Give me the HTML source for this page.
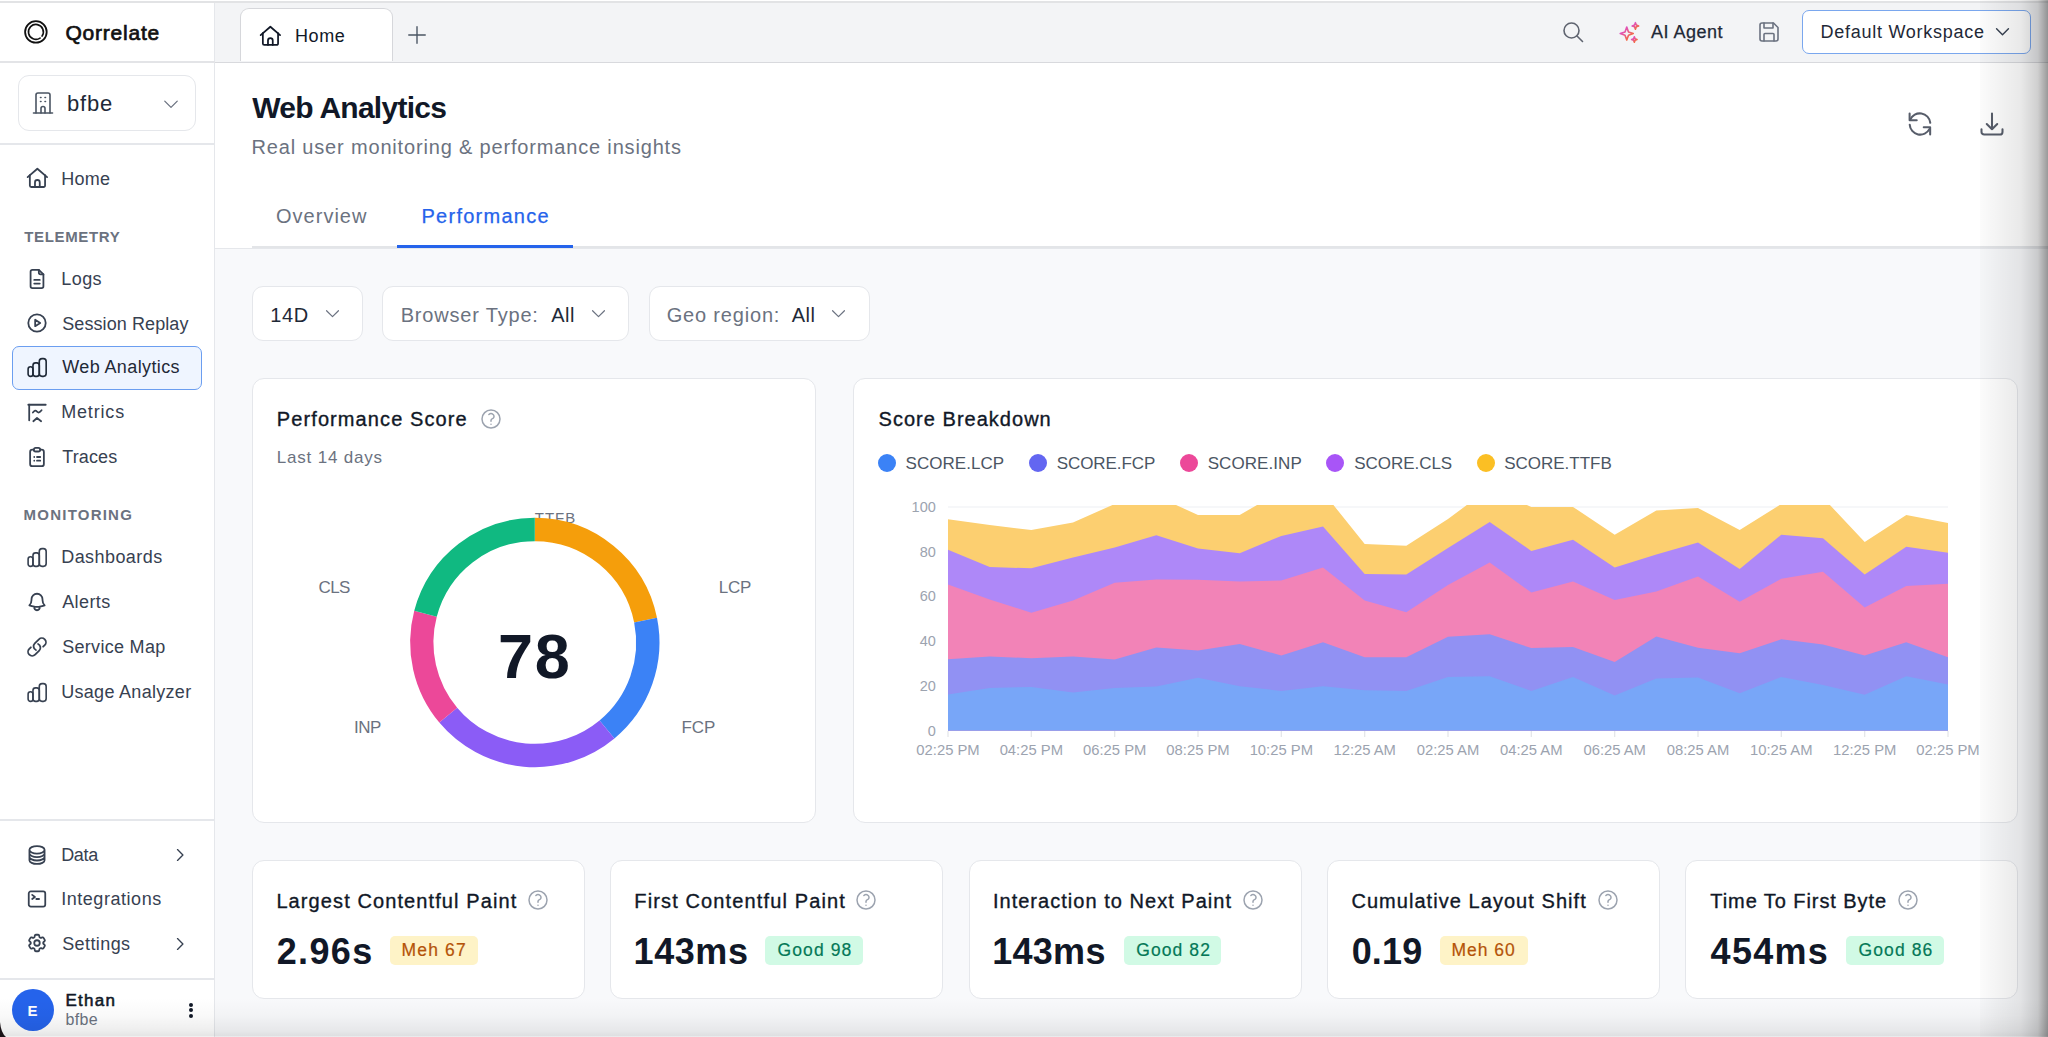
<!DOCTYPE html>
<html><head><meta charset="utf-8">
<style>
*{box-sizing:border-box;margin:0;padding:0}
html,body{width:2048px;height:1037px;overflow:hidden;background:#fff;font-family:"Liberation Sans",sans-serif;color:#111827;position:relative}
.t{position:absolute;line-height:1;white-space:nowrap}
.box{position:absolute}
.ic{position:absolute;display:block;overflow:visible}
.hl{position:absolute;height:1.5px;background:#e5e7eb}
.card{background:#fff;border:1.5px solid #e5e7eb;border-radius:12px}
#topline{position:absolute;left:0;top:1px;width:2048px;height:2px;background:#e2e3e5}
#sidebar{position:absolute;left:0;top:3px;width:215px;height:1035px;background:#fff;border-right:1.5px solid #e5e7eb}
#topbar{position:absolute;left:215px;top:3px;width:1833px;height:60px;background:#f3f4f6;border-bottom:1.8px solid #d8d9dd}
#header{position:absolute;left:215px;top:63px;width:1833px;height:185.5px;background:#fff;border-bottom:1.5px solid #e5e7eb}
#content{position:absolute;left:215px;top:248.5px;width:1833px;height:789px;background:#f8f9fb}
</style></head><body>
<div id="topline"></div>
<div id="sidebar"></div>
<svg class="ic" style="left:18px;top:14px" width="36" height="36" viewBox="0 0 36 36"><circle cx="17.9" cy="17.9" r="10.8" fill="none" stroke="#111" stroke-width="1.8"/><path d="M22.07 24.08A7.45 7.45 0 1 1 24.08 22.07" fill="none" stroke="#111" stroke-width="1.65" stroke-linecap="round"/></svg>
<div class="t" style="left:65.5px;top:22.1px;font-size:21px;color:#111111;font-weight:normal;letter-spacing:0.77px;-webkit-text-stroke:0.7px currentColor;">Qorrelate</div>
<div class="hl" style="left:0;top:61.2px;width:215px;height:1.8px;background:#e3e4e7"></div>
<div class="box" style="left:18px;top:75px;width:178px;height:56px;border-radius:11px;border:1.5px solid #e5e7eb"></div>
<svg class="ic" style="left:31px;top:91px;color:#4b5563" width="24" height="24" viewBox="0 0 24 24" fill="none" stroke="currentColor" stroke-linecap="round" stroke-linejoin="round" stroke-width="1.6"><path d="M5 22V4a2 2 0 0 1 2-2h10a2 2 0 0 1 2 2v18"/><path d="M2.5 22h19"/><path d="M10 22v-4.5a2 2 0 0 1 4 0V22"/><path d="M9.5 6.5h.5M14 6.5h.5M9.5 10.5h.5M14 10.5h.5"/></svg>
<div class="t" style="left:67.0px;top:92.7px;font-size:22px;color:#1f2937;font-weight:normal;letter-spacing:0.81px;">bfbe</div>
<svg class="ic" style="left:161px;top:94px;color:#6b7280" width="20" height="20" viewBox="0 0 24 24" fill="none" stroke="currentColor" stroke-linecap="round" stroke-linejoin="round" stroke-width="1.5"><path d="m4.5 8.5 7.5 7.5 7.5-7.5"/></svg>
<div class="hl" style="left:0;top:143px;width:215px"></div>
<svg class="ic" style="left:26px;top:167.4px;color:#374151" width="22" height="22" viewBox="0 0 24 24" fill="none" stroke="currentColor" stroke-linecap="round" stroke-linejoin="round" stroke-width="1.95"><path d="M1.8 11 12.4 1.9 23 11"/><path d="M4.2 8.8V20.2a1.6 1.6 0 0 0 1.6 1.6h13.4a1.6 1.6 0 0 0 1.6-1.6V8.8"/><path d="M9.8 21.8v-5a2.6 2.6 0 0 1 5.2 0v5"/></svg><div class="t" style="left:61.2px;top:169.6px;font-size:18px;color:#374151;font-weight:normal;letter-spacing:0.23px;">Home</div>
<div class="t" style="left:24.3px;top:229.0px;font-size:15px;color:#6b7280;font-weight:bold;letter-spacing:0.64px;">TELEMETRY</div>
<svg class="ic" style="left:26px;top:267.6px;color:#374151" width="22" height="22" viewBox="0 0 24 24" fill="none" stroke="currentColor" stroke-linecap="round" stroke-linejoin="round" stroke-width="1.95"><path d="M14 2H7a2 2 0 0 0-2 2v16a2 2 0 0 0 2 2h10a2 2 0 0 0 2-2V7z"/><path d="M14 2v3a2 2 0 0 0 2 2h3"/><path d="M9 13h6M9 17h6"/></svg><div class="t" style="left:61.2px;top:269.8px;font-size:18px;color:#374151;font-weight:normal;letter-spacing:0.46px;">Logs</div>
<svg class="ic" style="left:26px;top:312.3px;color:#374151" width="22" height="22" viewBox="0 0 24 24" fill="none" stroke="currentColor" stroke-linecap="round" stroke-linejoin="round" stroke-width="1.95"><circle cx="12" cy="12" r="9.5"/><path d="M10 8.5v7l5.5-3.5z"/></svg><div class="t" style="left:62.2px;top:314.5px;font-size:18px;color:#374151;font-weight:normal;letter-spacing:0.09px;">Session Replay</div>
<div class="box" style="left:12px;top:346px;width:190px;height:44px;border-radius:7px;border:1.5px solid #6b9ef0;background:#eff5ff"></div>
<svg class="ic" style="left:26px;top:356.20000000000005px;color:#1f2937" width="22" height="22" viewBox="0 0 24 24" fill="none" stroke="currentColor" stroke-linecap="round" stroke-linejoin="round" stroke-width="1.95"><g stroke-width="1.75"><rect x="2.3" y="11.8" width="5.3" height="10.4" rx="2.6"/><rect x="7.6" y="7.5" width="6.9" height="14.7" rx="2.8"/><rect x="14.5" y="2.9" width="7.5" height="19.3" rx="3"/></g></svg><div class="t" style="left:62.2px;top:358.4px;font-size:18px;color:#1f2937;font-weight:normal;letter-spacing:0.39px;">Web Analytics</div>
<svg class="ic" style="left:26px;top:402.0px;color:#374151" width="22" height="22" viewBox="0 0 24 24" fill="none" stroke="currentColor" stroke-linecap="round" stroke-linejoin="round" stroke-width="1.95"><path d="M2.5 3h19"/><path d="M3.5 3v17"/><path d="M7.5 11.5c2-2.5 3-2.5 4.5-1s2.5 1.5 5-1.5"/><path d="M8 21l4-3.5 4.5 3.5"/></svg><div class="t" style="left:61.2px;top:403.2px;font-size:18px;color:#374151;font-weight:normal;letter-spacing:0.83px;">Metrics</div>
<svg class="ic" style="left:26px;top:445.5px;color:#374151" width="22" height="22" viewBox="0 0 24 24" fill="none" stroke="currentColor" stroke-linecap="round" stroke-linejoin="round" stroke-width="1.95"><rect x="8.5" y="2" width="7" height="4" rx="2"/><path d="M8.5 4H7a2.5 2.5 0 0 0-2.5 2.5v13A2.5 2.5 0 0 0 7 22h10a2.5 2.5 0 0 0 2.5-2.5v-13A2.5 2.5 0 0 0 17 4h-1.5"/><path d="M9 12h.01M9 16h.01M12 12h3.5M12 16h3.5"/></svg><div class="t" style="left:62.2px;top:447.7px;font-size:18px;color:#374151;font-weight:normal;letter-spacing:0.13px;">Traces</div>
<div class="t" style="left:23.6px;top:507.3px;font-size:15px;color:#6b7280;font-weight:bold;letter-spacing:1.22px;">MONITORING</div>
<svg class="ic" style="left:26px;top:546.2px;color:#374151" width="22" height="22" viewBox="0 0 24 24" fill="none" stroke="currentColor" stroke-linecap="round" stroke-linejoin="round" stroke-width="1.95"><g stroke-width="1.75"><rect x="2.3" y="11.8" width="5.3" height="10.4" rx="2.6"/><rect x="7.6" y="7.5" width="6.9" height="14.7" rx="2.8"/><rect x="14.5" y="2.9" width="7.5" height="19.3" rx="3"/></g></svg><div class="t" style="left:61.2px;top:548.4px;font-size:18px;color:#374151;font-weight:normal;letter-spacing:0.44px;">Dashboards</div>
<svg class="ic" style="left:26px;top:591.1px;color:#374151" width="22" height="22" viewBox="0 0 24 24" fill="none" stroke="currentColor" stroke-linecap="round" stroke-linejoin="round" stroke-width="1.95"><path d="M14.857 17.082a23.848 23.848 0 0 0 5.454-1.31A8.967 8.967 0 0 1 18 9.75V9A6 6 0 0 0 6 9v.75a8.967 8.967 0 0 1-2.312 6.022c1.733.64 3.56 1.085 5.455 1.31m5.714 0a24.255 24.255 0 0 1-5.714 0m5.714 0a3 3 0 1 1-5.714 0"/></svg><div class="t" style="left:62.2px;top:593.3px;font-size:18px;color:#374151;font-weight:normal;letter-spacing:0.40px;">Alerts</div>
<svg class="ic" style="left:26px;top:635.6px;color:#374151" width="22" height="22" viewBox="0 0 24 24" fill="none" stroke="currentColor" stroke-linecap="round" stroke-linejoin="round" stroke-width="1.95"><path d="M13.19 8.688a4.5 4.5 0 0 1 1.242 7.244l-4.5 4.5a4.5 4.5 0 0 1-6.364-6.364l1.757-1.757m13.35-.622 1.757-1.757a4.5 4.5 0 0 0-6.364-6.364l-4.5 4.5a4.5 4.5 0 0 0 1.242 7.244"/></svg><div class="t" style="left:62.2px;top:637.8px;font-size:18px;color:#374151;font-weight:normal;letter-spacing:0.30px;">Service Map</div>
<svg class="ic" style="left:26px;top:680.6px;color:#374151" width="22" height="22" viewBox="0 0 24 24" fill="none" stroke="currentColor" stroke-linecap="round" stroke-linejoin="round" stroke-width="1.95"><g stroke-width="1.75"><rect x="2.3" y="11.8" width="5.3" height="10.4" rx="2.6"/><rect x="7.6" y="7.5" width="6.9" height="14.7" rx="2.8"/><rect x="14.5" y="2.9" width="7.5" height="19.3" rx="3"/></g></svg><div class="t" style="left:61.2px;top:682.8px;font-size:18px;color:#374151;font-weight:normal;letter-spacing:0.30px;">Usage Analyzer</div>
<div class="hl" style="left:0;top:819px;width:215px"></div>
<svg class="ic" style="left:26px;top:843.9px;color:#374151" width="22" height="22" viewBox="0 0 24 24" fill="none" stroke="currentColor" stroke-linecap="round" stroke-linejoin="round" stroke-width="1.95"><path d="M20.25 6.375c0 2.278-3.694 4.125-8.25 4.125S3.75 8.653 3.75 6.375m16.5 0c0-2.278-3.694-4.125-8.25-4.125S3.75 4.097 3.75 6.375m16.5 0v11.25c0 2.278-3.694 4.125-8.25 4.125s-8.25-1.847-8.25-4.125V6.375m16.5 0v3.75m-16.5-3.75v3.75m16.5 0v3.75C20.25 16.153 16.556 18 12 18s-8.25-1.847-8.25-4.125v-3.75m16.5 0c0 2.278-3.694 4.125-8.25 4.125s-8.25-1.847-8.25-4.125"/></svg><div class="t" style="left:61.2px;top:846.1px;font-size:18px;color:#374151;font-weight:normal;letter-spacing:-0.34px;">Data</div>
<svg class="ic" style="left:170px;top:845px;color:#374151" width="20" height="20" viewBox="0 0 24 24" fill="none" stroke="currentColor" stroke-linecap="round" stroke-linejoin="round" stroke-width="1.6"><path d="m9 5.5 6.5 6.5L9 18.5"/></svg>
<svg class="ic" style="left:26px;top:888.1px;color:#374151" width="22" height="22" viewBox="0 0 24 24" fill="none" stroke="currentColor" stroke-linecap="round" stroke-linejoin="round" stroke-width="1.95"><path d="m6.75 7.5 3 2.25-3 2.25m4.5 0h3m-9 8.25h13.5A2.25 2.25 0 0 0 21 18V6a2.25 2.25 0 0 0-2.25-2.25H5.25A2.25 2.25 0 0 0 3 6v12a2.25 2.25 0 0 0 2.25 2.25Z"/></svg><div class="t" style="left:61.2px;top:890.3px;font-size:18px;color:#374151;font-weight:normal;letter-spacing:0.54px;">Integrations</div>
<svg class="ic" style="left:26px;top:932.4px;color:#374151" width="22" height="22" viewBox="0 0 24 24" fill="none" stroke="currentColor" stroke-linecap="round" stroke-linejoin="round" stroke-width="1.95"><path d="M9.594 3.94c.09-.542.56-.94 1.11-.94h2.593c.55 0 1.02.398 1.11.94l.213 1.281c.063.374.313.686.645.87.074.04.147.083.22.127.325.196.72.257 1.075.124l1.217-.456a1.125 1.125 0 0 1 1.37.49l1.296 2.247a1.125 1.125 0 0 1-.26 1.431l-1.003.827c-.293.241-.438.613-.43.992a7.723 7.723 0 0 1 0 .255c-.008.378.137.75.43.991l1.004.827c.424.35.534.955.26 1.43l-1.298 2.247a1.125 1.125 0 0 1-1.369.491l-1.217-.456c-.355-.133-.75-.072-1.076.124a6.47 6.47 0 0 1-.22.128c-.331.183-.581.495-.644.869l-.213 1.281c-.09.543-.56.94-1.11.94h-2.594c-.55 0-1.019-.398-1.11-.94l-.213-1.281c-.062-.374-.312-.686-.644-.87a6.52 6.52 0 0 1-.22-.127c-.325-.196-.72-.257-1.076-.124l-1.217.456a1.125 1.125 0 0 1-1.369-.49l-1.297-2.247a1.125 1.125 0 0 1 .26-1.431l1.004-.827c.292-.24.437-.613.43-.991a6.932 6.932 0 0 1 0-.255c.007-.38-.138-.751-.43-.992l-1.004-.827a1.125 1.125 0 0 1-.26-1.43l1.297-2.247a1.125 1.125 0 0 1 1.37-.491l1.216.456c.356.133.751.072 1.076-.124.072-.044.146-.086.22-.128.332-.183.582-.495.644-.869l.214-1.28Z"/><path d="M15 12a3 3 0 1 1-6 0 3 3 0 0 1 6 0Z"/></svg><div class="t" style="left:62.2px;top:934.6px;font-size:18px;color:#374151;font-weight:normal;letter-spacing:0.41px;">Settings</div>
<svg class="ic" style="left:170px;top:934px;color:#374151" width="20" height="20" viewBox="0 0 24 24" fill="none" stroke="currentColor" stroke-linecap="round" stroke-linejoin="round" stroke-width="1.6"><path d="m9 5.5 6.5 6.5L9 18.5"/></svg>
<div class="hl" style="left:0;top:978px;width:215px"></div>
<div class="box" style="left:12px;top:988.6px;width:42px;height:42px;border-radius:50%;background:#2563eb"></div>
<div class="t" style="left:27.5px;top:1002.8px;font-size:15px;color:#fff;font-weight:bold;letter-spacing:0.00px;">E</div>
<div class="t" style="left:65.5px;top:992.3px;font-size:17px;color:#111827;font-weight:normal;letter-spacing:1.23px;-webkit-text-stroke:0.55px currentColor;">Ethan</div>
<div class="t" style="left:65.5px;top:1011.5px;font-size:16px;color:#6b7280;font-weight:normal;letter-spacing:0.35px;">bfbe</div>
<div class="box" style="left:189px;top:1002.5px;width:4px;height:4px;border-radius:50%;background:#111827"></div>
<div class="box" style="left:189px;top:1008px;width:4px;height:4px;border-radius:50%;background:#111827"></div>
<div class="box" style="left:189px;top:1013.5px;width:4px;height:4px;border-radius:50%;background:#111827"></div>
<div id="topbar"></div>
<div class="box" style="left:240.3px;top:7.9px;width:153px;height:53.3px;border-radius:9px 9px 0 0;border:1.3px solid #d6d7db;border-bottom:none;background:#fff"></div>
<svg class="ic" style="left:259px;top:25px;color:#111827" width="22" height="22" viewBox="0 0 24 24" fill="none" stroke="currentColor" stroke-linecap="round" stroke-linejoin="round" stroke-width="1.9"><path d="M1.8 11 12.4 1.9 23 11"/><path d="M4.2 8.8V20.2a1.6 1.6 0 0 0 1.6 1.6h13.4a1.6 1.6 0 0 0 1.6-1.6V8.8"/><path d="M9.8 21.8v-5a2.6 2.6 0 0 1 5.2 0v5"/></svg>
<div class="t" style="left:295.0px;top:26.5px;font-size:18px;color:#111827;font-weight:normal;letter-spacing:0.57px;">Home</div>
<svg class="ic" style="left:406px;top:24px;color:#4b5563" width="22" height="22" viewBox="0 0 24 24" fill="none" stroke="currentColor" stroke-linecap="round" stroke-linejoin="round" stroke-width="1.5"><path d="M12 3v18M3 12h18"/></svg>
<svg class="ic" style="left:1561px;top:20px;color:#5f6470" width="24" height="24" viewBox="0 0 24 24" fill="none" stroke="currentColor" stroke-linecap="round" stroke-linejoin="round" stroke-width="1.6"><circle cx="10.5" cy="10.5" r="7.5"/><path d="m16 16 5.5 5.5"/></svg>
<svg class="ic" style="left:1617px;top:20px" width="26" height="26" viewBox="0 0 24 24"><defs><linearGradient id="sg" x1="0" y1="0" x2="1" y2="1"><stop offset="0" stop-color="#d946ef"/><stop offset="1" stop-color="#f97316"/></linearGradient></defs><g fill="none" stroke="url(#sg)" stroke-width="1.5" stroke-linejoin="round"><path d="M9 6.5 10.6 11 15 12.5 10.6 14 9 18.5 7.4 14 3 12.5 7.4 11z"/><path d="M17 2.5l.8 2.2 2.2.8-2.2.8-.8 2.2-.8-2.2-2.2-.8 2.2-.8z"/><path d="M16 15.5l.7 1.8 1.8.7-1.8.7-.7 1.8-.7-1.8-1.8-.7 1.8-.7z"/></g></svg>
<div class="t" style="left:1651.0px;top:23.3px;font-size:18px;color:#1f2937;font-weight:normal;letter-spacing:0.51px;-webkit-text-stroke:0.25px currentColor;">AI Agent</div>
<svg class="ic" style="left:1757px;top:20px;color:#6b7280" width="24" height="24" viewBox="0 0 24 24" fill="none" stroke="currentColor" stroke-linecap="round" stroke-linejoin="round" stroke-width="1.6"><path d="M5 3h11.5L21 7.5V19a2 2 0 0 1-2 2H5a2 2 0 0 1-2-2V5a2 2 0 0 1 2-2z"/><path d="M7 3v5h9V3"/><path d="M7 21v-6.5a1 1 0 0 1 1-1h8a1 1 0 0 1 1 1V21"/></svg>
<div class="box" style="left:1802px;top:10px;width:229px;height:44px;border-radius:7px;border:1.5px solid #7aa7ee;background:#fff"></div>
<div class="t" style="left:1820.6px;top:23.3px;font-size:18px;color:#1f2937;font-weight:normal;letter-spacing:0.73px;">Default Workspace</div>
<svg class="ic" style="left:1993px;top:22px;color:#374151" width="19" height="19" viewBox="0 0 24 24" fill="none" stroke="currentColor" stroke-linecap="round" stroke-linejoin="round" stroke-width="1.8"><path d="m4.5 8.5 7.5 7.5 7.5-7.5"/></svg>
<div id="header"></div>
<div class="t" style="left:252.3px;top:93.0px;font-size:30px;color:#111827;font-weight:bold;letter-spacing:-0.73px;">Web Analytics</div>
<div class="t" style="left:251.5px;top:137.2px;font-size:20px;color:#6b7280;font-weight:normal;letter-spacing:0.83px;">Real user monitoring &amp; performance insights</div>
<svg class="ic" style="left:1906px;top:110px;color:#575d6a" width="28" height="28" viewBox="0 0 24 24" fill="none" stroke="currentColor" stroke-linecap="round" stroke-linejoin="round" stroke-width="1.75"><path d="M3.1 3v5.75h6.1"/><path d="M3.6 8.3A9 9 0 0 1 20.8 11"/><path d="M3.2 12.6A9 9 0 0 0 20.2 16.2"/><path d="M15.2 14.7h5.5v6.3"/></svg>
<svg class="ic" style="left:1978px;top:109.5px;color:#575d6a" width="28" height="28" viewBox="0 0 24 24" fill="none" stroke="currentColor" stroke-linecap="round" stroke-linejoin="round" stroke-width="1.75"><path d="M3 16.5v2.25A2.25 2.25 0 0 0 5.25 21h13.5A2.25 2.25 0 0 0 21 18.75V16.5M16.5 12 12 16.5m0 0L7.5 12m4.5 4.5V3"/></svg>
<div class="t" style="left:276.0px;top:205.8px;font-size:20px;color:#6b7280;font-weight:normal;letter-spacing:1.01px;">Overview</div>
<div class="t" style="left:421.5px;top:205.8px;font-size:20px;color:#2563eb;font-weight:normal;letter-spacing:1.26px;-webkit-text-stroke:0.25px currentColor;">Performance</div>
<div class="box" style="left:252px;top:246.2px;width:1796px;height:2px;background:#e3e5e8"></div>
<div class="box" style="left:397px;top:244.5px;width:176px;height:3px;background:#2563eb"></div>
<div id="content"></div>
<div class="box" style="left:252.3px;top:285.5px;width:111px;height:55.5px;border-radius:11px;border:1.5px solid #e5e7eb;background:#fff"></div>
<div class="t" style="left:270.3px;top:304.6px;font-size:20px;color:#1f2937;font-weight:normal;letter-spacing:0.58px;">14D</div>
<svg class="ic" style="left:323px;top:304px;color:#6b7280" width="19" height="19" viewBox="0 0 24 24" fill="none" stroke="currentColor" stroke-linecap="round" stroke-linejoin="round" stroke-width="1.5"><path d="m4.5 8.5 7.5 7.5 7.5-7.5"/></svg>
<div class="box" style="left:382.4px;top:285.5px;width:247px;height:55.5px;border-radius:11px;border:1.5px solid #e5e7eb;background:#fff"></div>
<div class="t" style="left:400.7px;top:304.6px;font-size:20px;color:#6b7280;font-weight:normal;letter-spacing:0.81px;">Browser Type:</div>
<div class="t" style="left:551.2px;top:304.6px;font-size:20px;color:#1f2937;font-weight:normal;letter-spacing:0.56px;">All</div>
<svg class="ic" style="left:589px;top:304px;color:#6b7280" width="19" height="19" viewBox="0 0 24 24" fill="none" stroke="currentColor" stroke-linecap="round" stroke-linejoin="round" stroke-width="1.5"><path d="m4.5 8.5 7.5 7.5 7.5-7.5"/></svg>
<div class="box" style="left:648.7px;top:285.5px;width:221px;height:55.5px;border-radius:11px;border:1.5px solid #e5e7eb;background:#fff"></div>
<div class="t" style="left:666.7px;top:304.6px;font-size:20px;color:#6b7280;font-weight:normal;letter-spacing:0.82px;">Geo region:</div>
<div class="t" style="left:791.7px;top:304.6px;font-size:20px;color:#1f2937;font-weight:normal;letter-spacing:0.56px;">All</div>
<svg class="ic" style="left:829px;top:304px;color:#6b7280" width="19" height="19" viewBox="0 0 24 24" fill="none" stroke="currentColor" stroke-linecap="round" stroke-linejoin="round" stroke-width="1.5"><path d="m4.5 8.5 7.5 7.5 7.5-7.5"/></svg>
<div class="box card" style="left:252px;top:378px;width:564px;height:445px"></div>
<div class="t" style="left:276.8px;top:409.4px;font-size:20px;color:#111827;font-weight:normal;letter-spacing:1.10px;-webkit-text-stroke:0.35px currentColor;">Performance Score</div>
<svg class="ic" style="left:479px;top:406.5px;color:#9ca3af" width="24" height="24" viewBox="0 0 24 24" fill="none" stroke="currentColor" stroke-linecap="round" stroke-linejoin="round" stroke-width="1.5"><path d="M9.879 7.519c1.171-1.025 3.071-1.025 4.242 0 1.172 1.025 1.172 2.687 0 3.712-.203.179-.43.326-.67.442-.745.361-1.45.999-1.45 1.827v.75M21 12a9 9 0 1 1-18 0 9 9 0 0 1 18 0Zm-9 5.25h.008v.008H12v-.008Z"/></svg>
<div class="t" style="left:276.8px;top:448.9px;font-size:17px;color:#6b7280;font-weight:normal;letter-spacing:0.80px;">Last 14 days</div>
<div class="t" style="left:534.8px;top:510.4px;font-size:15px;color:#6b7280;font-weight:normal;letter-spacing:0.97px;">TTFB</div>
<div class="t" style="left:318.6px;top:579.2px;font-size:17px;color:#6b7280;font-weight:normal;letter-spacing:-0.67px;">CLS</div>
<div class="t" style="left:718.8px;top:579.2px;font-size:17px;color:#6b7280;font-weight:normal;letter-spacing:-0.22px;">LCP</div>
<div class="t" style="left:354.0px;top:719.4px;font-size:17px;color:#6b7280;font-weight:normal;letter-spacing:-0.50px;">INP</div>
<div class="t" style="left:681.5px;top:719.4px;font-size:17px;color:#6b7280;font-weight:normal;letter-spacing:-0.08px;">FCP</div>
<div class="t" style="left:497.9px;top:624.9px;font-size:63px;color:#111827;font-weight:bold;letter-spacing:1.81px;">78</div>
<div class="box card" style="left:853px;top:378px;width:1165px;height:445px"></div>
<div class="t" style="left:878.6px;top:408.7px;font-size:20px;color:#111827;font-weight:normal;letter-spacing:1.02px;-webkit-text-stroke:0.35px currentColor;">Score Breakdown</div>
<div class="box" style="left:878px;top:453.5px;width:18px;height:18px;border-radius:50%;background:#3b82f6"></div>
<div class="t" style="left:905.5px;top:454.8px;font-size:17px;color:#4b5563;font-weight:normal;letter-spacing:0.05px;">SCORE.LCP</div>
<div class="box" style="left:1028.5px;top:453.5px;width:18px;height:18px;border-radius:50%;background:#6366f1"></div>
<div class="t" style="left:1056.7px;top:454.8px;font-size:17px;color:#4b5563;font-weight:normal;letter-spacing:-0.07px;">SCORE.FCP</div>
<div class="box" style="left:1180px;top:453.5px;width:18px;height:18px;border-radius:50%;background:#ec4899"></div>
<div class="t" style="left:1207.7px;top:454.8px;font-size:17px;color:#4b5563;font-weight:normal;letter-spacing:0.07px;">SCORE.INP</div>
<div class="box" style="left:1326px;top:453.5px;width:18px;height:18px;border-radius:50%;background:#a855f7"></div>
<div class="t" style="left:1354.2px;top:454.8px;font-size:17px;color:#4b5563;font-weight:normal;letter-spacing:-0.03px;">SCORE.CLS</div>
<div class="box" style="left:1476.6px;top:453.5px;width:18px;height:18px;border-radius:50%;background:#fbbf24"></div>
<div class="t" style="left:1504.2px;top:454.8px;font-size:17px;color:#4b5563;font-weight:normal;letter-spacing:-0.01px;">SCORE.TTFB</div>
<div class="t" style="left:855.8px;width:80px;text-align:right;top:499.8px;font-size:14.5px;color:#9ca3af">100</div>
<div class="t" style="left:855.8px;width:80px;text-align:right;top:544.6px;font-size:14.5px;color:#9ca3af">80</div>
<div class="t" style="left:855.8px;width:80px;text-align:right;top:589.3px;font-size:14.5px;color:#9ca3af">60</div>
<div class="t" style="left:855.8px;width:80px;text-align:right;top:634.0px;font-size:14.5px;color:#9ca3af">40</div>
<div class="t" style="left:855.8px;width:80px;text-align:right;top:678.8px;font-size:14.5px;color:#9ca3af">20</div>
<div class="t" style="left:855.8px;width:80px;text-align:right;top:723.5px;font-size:14.5px;color:#9ca3af">0</div>
<div class="t" style="left:898.0px;width:100px;text-align:center;top:743.0px;font-size:14.8px;color:#9ca3af">02:25 PM</div>
<div class="t" style="left:981.3px;width:100px;text-align:center;top:743.0px;font-size:14.8px;color:#9ca3af">04:25 PM</div>
<div class="t" style="left:1064.7px;width:100px;text-align:center;top:743.0px;font-size:14.8px;color:#9ca3af">06:25 PM</div>
<div class="t" style="left:1148.0px;width:100px;text-align:center;top:743.0px;font-size:14.8px;color:#9ca3af">08:25 PM</div>
<div class="t" style="left:1231.3px;width:100px;text-align:center;top:743.0px;font-size:14.8px;color:#9ca3af">10:25 PM</div>
<div class="t" style="left:1314.7px;width:100px;text-align:center;top:743.0px;font-size:14.8px;color:#9ca3af">12:25 AM</div>
<div class="t" style="left:1398.0px;width:100px;text-align:center;top:743.0px;font-size:14.8px;color:#9ca3af">02:25 AM</div>
<div class="t" style="left:1481.3px;width:100px;text-align:center;top:743.0px;font-size:14.8px;color:#9ca3af">04:25 AM</div>
<div class="t" style="left:1564.7px;width:100px;text-align:center;top:743.0px;font-size:14.8px;color:#9ca3af">06:25 AM</div>
<div class="t" style="left:1648.0px;width:100px;text-align:center;top:743.0px;font-size:14.8px;color:#9ca3af">08:25 AM</div>
<div class="t" style="left:1731.3px;width:100px;text-align:center;top:743.0px;font-size:14.8px;color:#9ca3af">10:25 AM</div>
<div class="t" style="left:1814.7px;width:100px;text-align:center;top:743.0px;font-size:14.8px;color:#9ca3af">12:25 PM</div>
<div class="t" style="left:1898.0px;width:100px;text-align:center;top:743.0px;font-size:14.8px;color:#9ca3af">02:25 PM</div>
<div class="box card" style="left:252.4px;top:860px;width:333px;height:139px"></div>
<div class="t" style="left:276.4px;top:891.1px;font-size:20px;color:#111827;font-weight:normal;letter-spacing:1.10px;-webkit-text-stroke:0.35px currentColor;">Largest Contentful Paint</div>
<svg class="ic" style="left:525.7px;top:888px;color:#9ca3af" width="24" height="24" viewBox="0 0 24 24" fill="none" stroke="currentColor" stroke-linecap="round" stroke-linejoin="round" stroke-width="1.5"><path d="M9.879 7.519c1.171-1.025 3.071-1.025 4.242 0 1.172 1.025 1.172 2.687 0 3.712-.203.179-.43.326-.67.442-.745.361-1.45.999-1.45 1.827v.75M21 12a9 9 0 1 1-18 0 9 9 0 0 1 18 0Zm-9 5.25h.008v.008H12v-.008Z"/></svg>
<div class="t" style="left:276.7px;top:933.5px;font-size:36px;color:#111827;font-weight:bold;letter-spacing:1.38px;">2.96s</div>
<div class="box" style="left:390.1px;top:936px;width:87.5px;height:28.7px;border-radius:5px;background:#fef3c7"></div>
<div class="t" style="left:401.6px;top:941.9px;font-size:17.5px;color:#b45309;font-weight:normal;letter-spacing:1.15px;-webkit-text-stroke:0.2px currentColor;">Meh 67</div>
<div class="box card" style="left:610.3px;top:860px;width:333px;height:139px"></div>
<div class="t" style="left:634.3px;top:891.1px;font-size:20px;color:#111827;font-weight:normal;letter-spacing:1.13px;-webkit-text-stroke:0.35px currentColor;">First Contentful Paint</div>
<svg class="ic" style="left:854px;top:888px;color:#9ca3af" width="24" height="24" viewBox="0 0 24 24" fill="none" stroke="currentColor" stroke-linecap="round" stroke-linejoin="round" stroke-width="1.5"><path d="M9.879 7.519c1.171-1.025 3.071-1.025 4.242 0 1.172 1.025 1.172 2.687 0 3.712-.203.179-.43.326-.67.442-.745.361-1.45.999-1.45 1.827v.75M21 12a9 9 0 1 1-18 0 9 9 0 0 1 18 0Zm-9 5.25h.008v.008H12v-.008Z"/></svg>
<div class="t" style="left:633.6px;top:933.5px;font-size:36px;color:#111827;font-weight:bold;letter-spacing:0.56px;">143ms</div>
<div class="box" style="left:765px;top:936px;width:98.4px;height:28.7px;border-radius:5px;background:#d1fae5"></div>
<div class="t" style="left:777.5px;top:941.9px;font-size:17.5px;color:#047857;font-weight:normal;letter-spacing:1.10px;-webkit-text-stroke:0.2px currentColor;">Good 98</div>
<div class="box card" style="left:968.9px;top:860px;width:333px;height:139px"></div>
<div class="t" style="left:992.9px;top:891.1px;font-size:20px;color:#111827;font-weight:normal;letter-spacing:1.03px;-webkit-text-stroke:0.35px currentColor;">Interaction to Next Paint</div>
<svg class="ic" style="left:1240.9px;top:888px;color:#9ca3af" width="24" height="24" viewBox="0 0 24 24" fill="none" stroke="currentColor" stroke-linecap="round" stroke-linejoin="round" stroke-width="1.5"><path d="M9.879 7.519c1.171-1.025 3.071-1.025 4.242 0 1.172 1.025 1.172 2.687 0 3.712-.203.179-.43.326-.67.442-.745.361-1.45.999-1.45 1.827v.75M21 12a9 9 0 1 1-18 0 9 9 0 0 1 18 0Zm-9 5.25h.008v.008H12v-.008Z"/></svg>
<div class="t" style="left:992.2px;top:933.5px;font-size:36px;color:#111827;font-weight:bold;letter-spacing:0.28px;">143ms</div>
<div class="box" style="left:1123.7px;top:936px;width:97.4px;height:28.7px;border-radius:5px;background:#d1fae5"></div>
<div class="t" style="left:1136.2px;top:941.9px;font-size:17.5px;color:#047857;font-weight:normal;letter-spacing:1.10px;-webkit-text-stroke:0.2px currentColor;">Good 82</div>
<div class="box card" style="left:1327.4px;top:860px;width:333px;height:139px"></div>
<div class="t" style="left:1351.4px;top:891.1px;font-size:20px;color:#111827;font-weight:normal;letter-spacing:1.05px;-webkit-text-stroke:0.35px currentColor;">Cumulative Layout Shift</div>
<svg class="ic" style="left:1595.7px;top:888px;color:#9ca3af" width="24" height="24" viewBox="0 0 24 24" fill="none" stroke="currentColor" stroke-linecap="round" stroke-linejoin="round" stroke-width="1.5"><path d="M9.879 7.519c1.171-1.025 3.071-1.025 4.242 0 1.172 1.025 1.172 2.687 0 3.712-.203.179-.43.326-.67.442-.745.361-1.45.999-1.45 1.827v.75M21 12a9 9 0 1 1-18 0 9 9 0 0 1 18 0Zm-9 5.25h.008v.008H12v-.008Z"/></svg>
<div class="t" style="left:1351.7px;top:933.5px;font-size:36px;color:#111827;font-weight:bold;letter-spacing:0.15px;">0.19</div>
<div class="box" style="left:1440px;top:936px;width:88.3px;height:28.7px;border-radius:5px;background:#fef3c7"></div>
<div class="t" style="left:1451.5px;top:941.9px;font-size:17.5px;color:#b45309;font-weight:normal;letter-spacing:0.95px;-webkit-text-stroke:0.2px currentColor;">Meh 60</div>
<div class="box card" style="left:1685.3px;top:860px;width:333px;height:139px"></div>
<div class="t" style="left:1710.3px;top:891.1px;font-size:20px;color:#111827;font-weight:normal;letter-spacing:0.93px;-webkit-text-stroke:0.35px currentColor;">Time To First Byte</div>
<svg class="ic" style="left:1896.3px;top:888px;color:#9ca3af" width="24" height="24" viewBox="0 0 24 24" fill="none" stroke="currentColor" stroke-linecap="round" stroke-linejoin="round" stroke-width="1.5"><path d="M9.879 7.519c1.171-1.025 3.071-1.025 4.242 0 1.172 1.025 1.172 2.687 0 3.712-.203.179-.43.326-.67.442-.745.361-1.45.999-1.45 1.827v.75M21 12a9 9 0 1 1-18 0 9 9 0 0 1 18 0Zm-9 5.25h.008v.008H12v-.008Z"/></svg>
<div class="t" style="left:1710.6px;top:933.5px;font-size:36px;color:#111827;font-weight:bold;letter-spacing:1.26px;">454ms</div>
<div class="box" style="left:1846px;top:936px;width:97.5px;height:28.7px;border-radius:5px;background:#d1fae5"></div>
<div class="t" style="left:1858.5px;top:941.9px;font-size:17.5px;color:#047857;font-weight:normal;letter-spacing:1.10px;-webkit-text-stroke:0.2px currentColor;">Good 86</div>
<svg class="ic" style="left:0;top:0" width="2048" height="1037" viewBox="0 0 2048 1037">
<defs><clipPath id="pc"><rect x="948" y="505" width="1000" height="226"/></clipPath></defs>
<g>
<line x1="948" y1="507" x2="1948" y2="507" stroke="#eef0f3" stroke-width="1.2"/>
</g>
<g clip-path="url(#pc)">
<polygon fill="#fccf70" points="948.0,519.2 989.7,525.0 1031.3,530.1 1073.0,522.4 1114.7,504.0 1156.3,496.0 1198.0,515.0 1239.7,515.0 1281.3,491.0 1323.0,492.0 1364.7,544.0 1406.3,545.8 1448.0,519.0 1489.7,488.0 1531.3,507.0 1573.0,506.9 1614.7,534.7 1656.3,510.4 1698.0,508.1 1739.7,530.1 1781.3,504.0 1823.0,497.6 1864.7,542.1 1906.3,515.0 1948.0,523.1 1948.0,730.6 1906.3,730.6 1864.7,730.6 1823.0,730.6 1781.3,730.6 1739.7,730.6 1698.0,730.6 1656.3,730.6 1614.7,730.6 1573.0,730.6 1531.3,730.6 1489.7,730.6 1448.0,730.6 1406.3,730.6 1364.7,730.6 1323.0,730.6 1281.3,730.6 1239.7,730.6 1198.0,730.6 1156.3,730.6 1114.7,730.6 1073.0,730.6 1031.3,730.6 989.7,730.6 948.0,730.6"/>
<polygon fill="#ae88f8" points="948.0,549.7 989.7,567.1 1031.3,568.3 1073.0,557.4 1114.7,547.4 1156.3,535.2 1198.0,548.6 1239.7,553.2 1281.3,535.9 1323.0,526.6 1364.7,574.0 1406.3,574.5 1448.0,548.0 1489.7,522.0 1531.3,550.9 1573.0,539.8 1614.7,567.6 1656.3,554.4 1698.0,542.5 1739.7,569.0 1781.3,534.7 1823.0,538.2 1864.7,574.5 1906.3,546.7 1948.0,552.8 1948.0,730.6 1906.3,730.6 1864.7,730.6 1823.0,730.6 1781.3,730.6 1739.7,730.6 1698.0,730.6 1656.3,730.6 1614.7,730.6 1573.0,730.6 1531.3,730.6 1489.7,730.6 1448.0,730.6 1406.3,730.6 1364.7,730.6 1323.0,730.6 1281.3,730.6 1239.7,730.6 1198.0,730.6 1156.3,730.6 1114.7,730.6 1073.0,730.6 1031.3,730.6 989.7,730.6 948.0,730.6"/>
<polygon fill="#f283b7" points="948.0,584.5 989.7,599.5 1031.3,612.7 1073.0,600.6 1114.7,582.8 1156.3,579.4 1198.0,579.8 1239.7,581.4 1281.3,580.5 1323.0,567.6 1364.7,600.6 1406.3,612.2 1448.0,585.0 1489.7,562.5 1531.3,592.5 1573.0,581.4 1614.7,600.0 1656.3,591.4 1698.0,576.6 1739.7,601.8 1781.3,578.7 1823.0,571.7 1864.7,607.6 1906.3,586.1 1948.0,583.8 1948.0,730.6 1906.3,730.6 1864.7,730.6 1823.0,730.6 1781.3,730.6 1739.7,730.6 1698.0,730.6 1656.3,730.6 1614.7,730.6 1573.0,730.6 1531.3,730.6 1489.7,730.6 1448.0,730.6 1406.3,730.6 1364.7,730.6 1323.0,730.6 1281.3,730.6 1239.7,730.6 1198.0,730.6 1156.3,730.6 1114.7,730.6 1073.0,730.6 1031.3,730.6 989.7,730.6 948.0,730.6"/>
<polygon fill="#9191f3" points="948.0,659.2 989.7,656.4 1031.3,658.3 1073.0,656.4 1114.7,659.6 1156.3,647.6 1198.0,650.4 1239.7,643.9 1281.3,655.5 1323.0,642.3 1364.7,657.3 1406.3,657.3 1448.0,636.7 1489.7,634.2 1531.3,648.1 1573.0,646.9 1614.7,662.0 1656.3,636.5 1698.0,647.8 1739.7,653.2 1781.3,639.3 1823.0,644.6 1864.7,655.5 1906.3,642.3 1948.0,657.3 1948.0,730.6 1906.3,730.6 1864.7,730.6 1823.0,730.6 1781.3,730.6 1739.7,730.6 1698.0,730.6 1656.3,730.6 1614.7,730.6 1573.0,730.6 1531.3,730.6 1489.7,730.6 1448.0,730.6 1406.3,730.6 1364.7,730.6 1323.0,730.6 1281.3,730.6 1239.7,730.6 1198.0,730.6 1156.3,730.6 1114.7,730.6 1073.0,730.6 1031.3,730.6 989.7,730.6 948.0,730.6"/>
<polygon fill="#78a6f8" points="948.0,694.4 989.7,687.9 1031.3,686.9 1073.0,692.5 1114.7,687.9 1156.3,686.5 1198.0,677.7 1239.7,686.3 1281.3,690.9 1323.0,686.3 1364.7,690.2 1406.3,690.9 1448.0,677.0 1489.7,676.3 1531.3,690.9 1573.0,677.0 1614.7,695.5 1656.3,678.6 1698.0,677.5 1739.7,693.2 1781.3,677.0 1823.0,685.1 1864.7,694.8 1906.3,676.3 1948.0,684.6 1948.0,730.6 1906.3,730.6 1864.7,730.6 1823.0,730.6 1781.3,730.6 1739.7,730.6 1698.0,730.6 1656.3,730.6 1614.7,730.6 1573.0,730.6 1531.3,730.6 1489.7,730.6 1448.0,730.6 1406.3,730.6 1364.7,730.6 1323.0,730.6 1281.3,730.6 1239.7,730.6 1198.0,730.6 1156.3,730.6 1114.7,730.6 1073.0,730.6 1031.3,730.6 989.7,730.6 948.0,730.6"/>

</g>
<g stroke="#e3e5e8" stroke-width="1.2">
<line x1="948.0" y1="731" x2="948.0" y2="737"/><line x1="1031.3" y1="731" x2="1031.3" y2="737"/><line x1="1114.7" y1="731" x2="1114.7" y2="737"/><line x1="1198.0" y1="731" x2="1198.0" y2="737"/><line x1="1281.3" y1="731" x2="1281.3" y2="737"/><line x1="1364.7" y1="731" x2="1364.7" y2="737"/><line x1="1448.0" y1="731" x2="1448.0" y2="737"/><line x1="1531.3" y1="731" x2="1531.3" y2="737"/><line x1="1614.7" y1="731" x2="1614.7" y2="737"/><line x1="1698.0" y1="731" x2="1698.0" y2="737"/><line x1="1781.3" y1="731" x2="1781.3" y2="737"/><line x1="1864.7" y1="731" x2="1864.7" y2="737"/><line x1="1948.0" y1="731" x2="1948.0" y2="737"/>
</g>
<g fill="none" stroke-width="23.3">
<path d="M534.80 529.50 A113 113 0 0 1 645.57 620.16" stroke="#f59e0b"/>
<path d="M645.57 620.16 A113 113 0 0 1 606.98 729.44" stroke="#3b82f6"/>
<path d="M606.98 729.44 A113 113 0 0 1 448.24 715.13" stroke="#8b5cf6"/>
<path d="M448.24 715.13 A113 113 0 0 1 425.50 613.83" stroke="#ec4899"/>
<path d="M425.50 613.83 A113 113 0 0 1 534.80 529.50" stroke="#10b981"/>
</g>
</svg>
<div class="box" style="left:1980px;top:0;width:68px;height:1037px;background:linear-gradient(to right,rgba(0,0,0,0.015) 0%,rgba(0,0,0,0.04) 20%,rgba(0,0,0,0.085) 60%,rgba(0,0,0,0.19) 85%,rgba(0,0,0,0.40) 100%)"></div>
<div class="box" style="left:0;top:998px;width:2048px;height:39px;background:linear-gradient(to bottom,rgba(0,0,0,0) 0%,rgba(0,0,0,0.025) 45%,rgba(0,0,0,0.07) 85%,rgba(0,0,0,0.1) 96%,rgba(0,0,0,0.04) 100%)"></div>
<svg class="ic" style="left:0;top:1017px" width="10" height="20" viewBox="0 0 10 20"><path d="M0 5 Q1 16 6 20 L0 20 Z" fill="#1a1216"/></svg>
</body></html>
